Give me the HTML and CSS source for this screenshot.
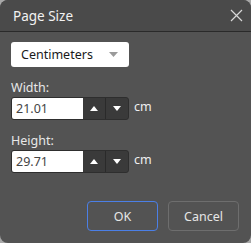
FILE: index.html
```html
<!DOCTYPE html>
<html>
<head>
<meta charset="utf-8">
<link rel="stylesheet" href="styles.css">
</head>
<body>
<div class="dialog">
  <div class="header">
    <span class="title">Page Size</span>
    <svg class="close" width="13" height="13" viewBox="0 0 13 13"><path d="M1 1L12 12M12 1L1 12" stroke="#d8d8d8" stroke-width="1.2" fill="none"/></svg>
  </div>
  <div class="content">
    <div class="select">
      <span>Centimeters</span>
      <svg class="caret" width="9" height="5" viewBox="0 0 9 5"><path d="M0 0H9L4.5 5Z" fill="#9a9a9a"/></svg>
    </div>
    <div class="label">Width:</div>
    <div class="row">
      <div class="spin">
        <span class="val">21.01</span>
        <span class="btn"><svg width="8" height="5" viewBox="0 0 8 5"><path d="M0 5H8L4 0Z" fill="#fff"/></svg></span>
        <span class="btn"><svg width="8" height="5" viewBox="0 0 8 5"><path d="M0 0H8L4 5Z" fill="#fff"/></svg></span>
      </div>
      <span class="unit">cm</span>
    </div>
    <div class="label">Height:</div>
    <div class="row">
      <div class="spin">
        <span class="val">29.71</span>
        <span class="btn"><svg width="8" height="5" viewBox="0 0 8 5"><path d="M0 5H8L4 0Z" fill="#fff"/></svg></span>
        <span class="btn"><svg width="8" height="5" viewBox="0 0 8 5"><path d="M0 0H8L4 5Z" fill="#fff"/></svg></span>
      </div>
      <span class="unit">cm</span>
    </div>
  </div>
  <div class="footer">
    <button class="ok">OK</button>
    <button class="cancel">Cancel</button>
  </div>
</div>
</body>
</html>
```
FILE: styles.css
```css
html, body { margin: 0; padding: 0; }
body { background: #a8a8a8; font-family: "Noto Sans", "Open Sans", sans-serif; }
.dialog {
  width: 251px; height: 243px; background: #535353;
  border-radius: 8px; overflow: hidden;
  display: flex; flex-direction: column;
}
.header {
  height: 32px; box-sizing: border-box; background: #4a4a4a;
  border-bottom: 1px solid #2a2a2a;
  display: flex; align-items: center; justify-content: space-between;
  padding: 0 8px 0 13px;
}
.title { color: #f2f2f2; font-size: 13.5px; }
.close { display: block; }
.content { padding: 10px 11px 0 11px; }
.select {
  width: 118px; height: 25px; box-sizing: border-box; background: #fff;
  border-radius: 3px; display: flex; align-items: center; justify-content: space-between;
  padding: 0 11px 0 10px; font-size: 12.5px; color: #1a1a1a;
}
.caret { display: block; }
.label { color: #e8e8e8; font-size: 12.5px; margin-top: 11px; height: 19px; line-height: 19px; }
.row { display: flex; align-items: center; }
.spin {
  width: 118px; height: 23px; box-sizing: border-box; display: flex;
  border: 1px solid #2e2e2e; border-radius: 3px; overflow: hidden; background: #3a3a3a;
}
.val {
  flex: 0 0 71px; background: #fff; color: #444; font-size: 12.5px;
  display: flex; align-items: center; padding-left: 4px; box-sizing: border-box;
}
.btn { flex: 1; display: flex; align-items: center; justify-content: center; }
.btn + .btn { border-left: 1px solid #2a2a2a; }
.btn svg { display: block; }
.unit { color: #f0f0f0; font-size: 12.5px; margin-left: 5px; margin-top: -5px; }
.footer { margin-top: auto; display: flex; justify-content: flex-end; gap: 10px; padding: 0 12px 12px 0; }
.footer button {
  width: 71px; height: 30px; border-radius: 4px; background: transparent;
  font-family: inherit; font-size: 12.5px; color: #e6e6e6;
}
.ok { border: 1px solid #4b7fe6; }
.cancel { border: 1px solid #6e6e6e; }
```
